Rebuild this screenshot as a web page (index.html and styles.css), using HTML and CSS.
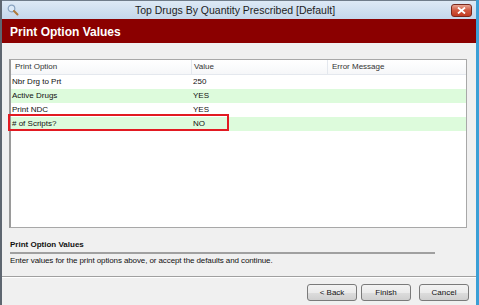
FILE: index.html
```html
<!DOCTYPE html>
<html lang="en">
<head>
    <meta charset="UTF-8">
    <title>Top Drugs By Quantity Prescribed [Default]</title>
    <link rel="stylesheet" href="styles.css">
</head>
<body>
    <div class="window">
        <div class="titlebar">
            <svg class="app-icon" width="12" height="12" viewBox="0 0 12 12">
                <circle cx="4.5" cy="4.5" r="3.3" fill="#dbe9f7" stroke="#8aa4c0" stroke-width="1.2"/>
                <line x1="7" y1="7" x2="10.5" y2="10.5" stroke="#b07a3a" stroke-width="2" stroke-linecap="round"/>
            </svg>
            <div class="title">Top Drugs By Quantity Prescribed [Default]</div>
            <div class="close">
                <svg width="9" height="7" viewBox="0 0 9 7">
                    <path d="M1 0.5 L8 6.5 M8 0.5 L1 6.5" stroke="#fff" stroke-width="1.8"/>
                </svg>
            </div>
        </div>

        <div class="banner">Print Option Values</div>

        <div class="content">
            <div class="grid">
                <div class="row head">
                    <div class="cell c1">Print Option</div>
                    <div class="cell c2">Value</div>
                    <div class="cell c3">Error Message</div>
                </div>
                <div class="row">
                    <div class="cell c1">Nbr Drg to Prt</div>
                    <div class="cell c2">250</div>
                    <div class="cell c3"></div>
                </div>
                <div class="row alt">
                    <div class="cell c1">Active Drugs</div>
                    <div class="cell c2">YES</div>
                    <div class="cell c3"></div>
                </div>
                <div class="row">
                    <div class="cell c1">Print NDC</div>
                    <div class="cell c2">YES</div>
                    <div class="cell c3"></div>
                </div>
                <div class="row alt">
                    <div class="cell c1"># of Scripts?</div>
                    <div class="cell c2">NO</div>
                    <div class="cell c3"></div>
                </div>
                <div class="highlight"></div>
            </div>

            <div class="info">
                <div class="info-title">Print Option Values</div>
                <div class="info-text">Enter values for the print options above, or accept the defaults and continue.</div>
            </div>
        </div>

        <div class="footer">
            <button class="btn">&lt; Back</button>
            <button class="btn">Finish</button>
            <button class="btn cancel">Cancel</button>
        </div>
    </div>
</body>
</html>
```

FILE: styles.css
```css
body {
    margin: 0;
    width: 479px;
    height: 305px;
    overflow: hidden;
    font-family: "Liberation Sans", Arial, sans-serif;
}

.window {
    display: flex;
    flex-direction: column;
    height: 305px;
    background: #f0f0f0;
    border-left: 2px solid #5e6670;
    border-right: 3px solid #3b9fd6;
    box-sizing: border-box;
}

.titlebar {
    display: flex;
    align-items: center;
    height: 19px;
    padding: 0 3px 0 3px;
    border-top: 1px solid #6f7c8a;
    background: linear-gradient(#dde9f5, #c4d7eb);
    box-sizing: border-box;
}

.app-icon {
    margin-left: 2px;
}

.title {
    flex: 1;
    text-align: center;
    font-size: 10.5px;
    color: #1e1e1e;
}

.close {
    display: flex;
    align-items: center;
    justify-content: center;
    width: 21px;
    height: 13px;
    margin-top: 1px;
    margin-right: 1px;
    border: 1px solid #7a2a1e;
    border-radius: 3px;
    background: linear-gradient(#e8a593, #d0583f 50%, #c23a22);
    box-sizing: border-box;
}

.banner {
    height: 24px;
    line-height: 26px;
    padding-left: 8px;
    background: #8b0000;
    color: #fff;
    font-weight: bold;
    font-size: 12px;
}

.content {
    flex: 1;
    padding: 16px 9px 0 7px;
}

.grid {
    position: relative;
    height: 169px;
    background: #fff;
    border: 1px solid #a8a8a8;
    border-left: 2px solid #9a9a9a;
    box-sizing: border-box;
    font-size: 8px;
    color: #111;
}

.row {
    display: flex;
    height: 14px;
    line-height: 14px;
}

.row.alt {
    background: #ddfbdc;
}

.row.head {
    background: linear-gradient(#ffffff, #f6f7f9);
    border-bottom: 1px solid #e4e8ee;
    color: #333;
}

.cell {
    padding-left: 1px;
    white-space: nowrap;
}

.c1 {
    width: 179px;
}

.c2 {
    width: 133px;
    padding-left: 2px;
}

.c3 {
    flex: 1;
    padding-left: 4px;
}

.head .c1 {
    padding-left: 4px;
}

.head .c2,
.head .c3 {
    border-left: 1px solid #e4e8ee;
}

.head .c1 {
    width: 176px;
}

.highlight {
    position: absolute;
    left: -3px;
    top: 54px;
    width: 221px;
    height: 17px;
    border: 2px solid #e21a22;
    box-sizing: border-box;
}

.info {
    margin-top: 11px;
    padding-left: 1px;
    font-size: 8px;
    color: #111;
}

.info-title {
    width: 425px;
    font-weight: bold;
    line-height: 12px;
    padding-bottom: 1px;
    border-bottom: 2px solid #a0a0a0;
}

.info-text {
    line-height: 12px;
    padding-top: 1px;
    letter-spacing: -0.1px;
}

.footer {
    display: flex;
    justify-content: flex-end;
    gap: 4px;
    height: 29px;
    padding: 7px 7px 0 0;
    border-top: 1px solid #a0a0a0;
    box-shadow: inset 0 1px 0 #fff;
    box-sizing: border-box;
}

.btn {
    width: 50px;
    height: 17px;
    padding: 0;
    font-family: "Liberation Sans", Arial, sans-serif;
    font-size: 8px;
    color: #111;
    border: 1px solid #7a7a7a;
    border-radius: 3px;
    background: linear-gradient(#f3f3f3, #ebebeb 50%, #dddddd 51%, #cfcfcf);
}

.btn.cancel {
    margin-left: 4px;
}
```
